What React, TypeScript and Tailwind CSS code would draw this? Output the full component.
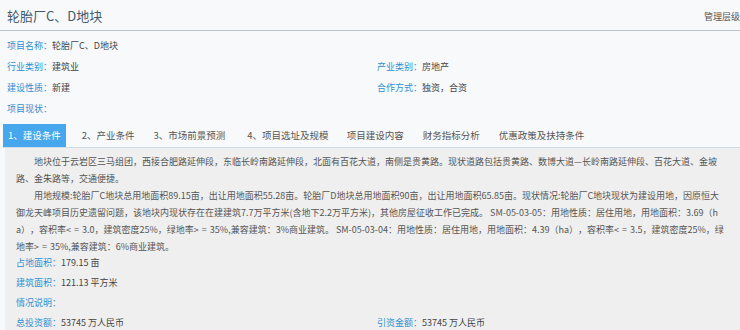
import React from 'react';

const font = { fontFamily: '"Noto Sans CJK SC", "Noto Sans", sans-serif' };

const Field: React.FC<{ label: string; value?: string; className?: string }> = ({ label, value, className }) => (
    <div className={`flex items-center text-[9px] ${className ?? ''}`}>
        <span className="text-[#2f8fd0]">{label}：</span>
        <span className="text-[#444]">{value}</span>
    </div>
);

// comparison signs are spaced out in the source page
const Op: React.FC<{ children: string }> = ({ children }) => <span className="tracking-[3px]">{children}</span>;

const App: React.FC = () => {
    const tabs = ['1、建设条件', '2、产业条件', '3、市场前景预测', '4、项目选址及规模', '项目建设内容', '财务指标分析', '优惠政策及扶持条件'];

    return (
        <div className="w-[740px] h-[330px] overflow-hidden bg-[#f8f9fb]" style={font}>
            <div className="flex items-center justify-between h-[31px] pl-[7px] border-b border-[#b9c3cc]">
                <h1 className="text-[13px] text-[#445a6c] pt-[2px]">轮胎厂C、D地块</h1>
                <span className="text-[9px] text-[#555] whitespace-nowrap pt-[4px]">管理层级</span>
            </div>

            <div className="pl-[7px] pt-[4px]">
                <div className="h-[21px] flex items-center">
                    <Field label="项目名称" value="轮胎厂C、D地块" />
                </div>
                <div className="h-[21px] grid grid-cols-[370px_1fr] items-center">
                    <Field label="行业类别" value="建筑业" />
                    <Field label="产业类别" value="房地产" />
                </div>
                <div className="h-[21px] grid grid-cols-[370px_1fr] items-center">
                    <Field label="建设性质" value="新建" />
                    <Field label="合作方式" value="独资，合资" />
                </div>
                <div className="h-[21px] flex items-center">
                    <Field label="项目现状" />
                </div>
            </div>

            <div className="mt-[5px] ml-[3px] flex items-stretch h-[24px] border-b border-[#cfdbe6] text-[9.5px] text-[#555]">
                {tabs.map((t, i) => (
                    <div
                        key={t}
                        className={
                            i === 0
                                ? 'flex items-center px-[5px] bg-[#46a7ec] text-white mr-[9px]'
                                : i === 3
                                  ? 'flex items-center px-[7px] mr-[4px] ml-[3px]'
                                  : 'flex items-center px-[7px] mr-[5px]'
                        }
                    >
                        {t}
                    </div>
                ))}
            </div>

            <div className="ml-[5px] bg-[#efefef] pl-[11px] pr-[14px] pt-[5px] h-full">
                <div className="text-[9px] leading-[17px] text-[#555] break-all [text-spacing-trim:space-all]">
                    <p className="indent-[2em]">
                        地块位于云岩区三马组团，西接合肥路延伸段，东临长岭南路延伸段，北面有百花大道，南侧是贵黄路。现状道路包括贵黄路、数博大道—长岭南路延伸段、百花大道、金坡路、金朱路等，交通便捷。
                    </p>
                    <p className="indent-[2em]">
                        用地规模:轮胎厂C地块总用地面积89.15亩，出让用地面积55.28亩。轮胎厂D地块总用地面积90亩，出让用地面积65.85亩。现状情况:轮胎厂C地块现状为建设用地，因原恒大御龙天峰项目历史遗留问题，该地块内现状存在在建建筑7.7万平方米(含地下2.2万平方米)，其他房屋征收工作已完成。 SM-05-03-05：用地性质：居住用地，用地面积：3.69（ha），容积率<Op>&lt;=</Op>3.0，建筑密度25%，绿地率<Op>&gt;=</Op>35%,兼容建筑：3%商业建筑。 SM-05-03-04：用地性质：居住用地，用地面积：4.39（ha），容积率<Op>&lt;=</Op>3.5，建筑密度25%，绿地率<Op>&gt;=</Op>35%,兼容建筑：6%商业建筑。
                    </p>
                </div>
                <div className="mt-[-2px]">
                    <div className="h-[20px] flex items-center">
                        <Field label="占地面积" value="179.15 亩" />
                    </div>
                    <div className="h-[20px] flex items-center">
                        <Field label="建筑面积" value="121.13 平方米" />
                    </div>
                    <div className="h-[20px] flex items-center">
                        <Field label="情况说明" />
                    </div>
                    <div className="h-[20px] grid grid-cols-[361px_1fr] items-center">
                        <Field label="总投资额" value="53745 万人民币" />
                        <Field label="引资金额" value="53745 万人民币" />
                    </div>
                </div>
            </div>
        </div>
    );
};

export default App;
